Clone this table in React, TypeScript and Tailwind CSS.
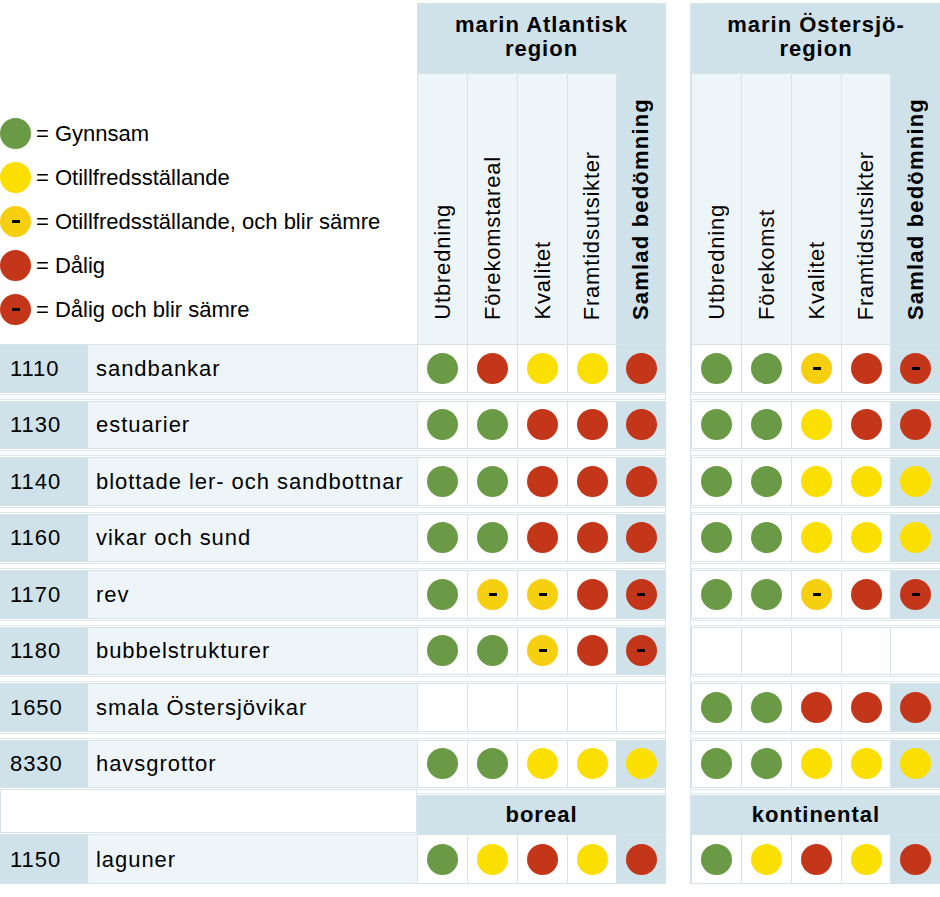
import React from "react";

type V = "g" | "y" | "yd" | "r" | "rd" | "";

type Habitat = { code: string; name: string; a: V[]; b: V[] };

const rows: Habitat[] = [
  { code: "1110", name: "sandbankar", a: ["g", "r", "y", "y", "r"], b: ["g", "g", "yd", "r", "rd"] },
  { code: "1130", name: "estuarier", a: ["g", "g", "r", "r", "r"], b: ["g", "g", "y", "r", "r"] },
  { code: "1140", name: "blottade ler- och sandbottnar", a: ["g", "g", "r", "r", "r"], b: ["g", "g", "y", "y", "y"] },
  { code: "1160", name: "vikar och sund", a: ["g", "g", "r", "r", "r"], b: ["g", "g", "y", "y", "y"] },
  { code: "1170", name: "rev", a: ["g", "yd", "yd", "r", "rd"], b: ["g", "g", "yd", "r", "rd"] },
  { code: "1180", name: "bubbelstrukturer", a: ["g", "g", "yd", "r", "rd"], b: ["", "", "", "", ""] },
  { code: "1650", name: "smala Östersjövikar", a: ["", "", "", "", ""], b: ["g", "g", "r", "r", "r"] },
  { code: "8330", name: "havsgrottor", a: ["g", "g", "y", "y", "y"], b: ["g", "g", "y", "y", "y"] },
];

const laguner: Habitat = { code: "1150", name: "laguner", a: ["g", "y", "r", "y", "r"], b: ["g", "y", "r", "y", "r"] };

const widthsA = ["w-[50px]", "w-[50px]", "w-[50px]", "w-[49px]", "w-[49px]"];
const widthsB = ["w-[50px]", "w-[50px]", "w-[50px]", "w-[49px]", "w-[50px]"];

const colsA = ["Utbredning", "Förekomstareal", "Kvalitet", "Framtidsutsikter", "Samlad bedömning"];
const colsB = ["Utbredning", "Förekomst", "Kvalitet", "Framtidsutsikter", "Samlad bedömning"];

const legend: { v: V; label: string }[] = [
  { v: "g", label: "= Gynnsam" },
  { v: "y", label: "= Otillfredsställande" },
  { v: "yd", label: "= Otillfredsställande, och blir sämre" },
  { v: "r", label: "= Dålig" },
  { v: "rd", label: "= Dålig och blir sämre" },
];

function Dot({ v }: { v: V }) {
  if (!v) return null;
  const color =
    v === "g"
      ? "bg-[#6a9a46]"
      : v === "r" || v === "rd"
        ? "bg-[#c4361a]"
        : v === "yd"
          ? "bg-[#f5cf10]"
          : "bg-[#fbdf00]";
  return (
    <span className={`flex h-[31px] w-[31px] shrink-0 items-center justify-center rounded-full ${color}`}>
      {(v === "yd" || v === "rd") && <span className="h-[3px] w-[8px] bg-black" />}
    </span>
  );
}

function Gap() {
  return <div className="w-[26px] shrink-0 self-stretch border-x border-[#d5e4eb] bg-white" />;
}

function Strip() {
  return (
    <div className="h-full py-[1px]">
      <div className="h-full border-y border-[#dde9ef] bg-white" />
    </div>
  );
}

function Cells({ vals, widths }: { vals: V[]; widths: string[] }) {
  return (
    <div className="flex border-y border-[#d5e4eb]">
      {vals.map((v, i) => (
        <div
          key={i}
          className={[
            "flex items-center justify-center border-l border-[#d5e4eb]",
            widths[i],
            i === 4 && v ? "bg-[#cfe1e9]" : "bg-white",
          ].join(" ")}
        >
          <Dot v={v} />
        </div>
      ))}
    </div>
  );
}

function Row({ r, h }: { r: Habitat; h: string }) {
  return (
    <div className={`flex ${h}`}>
      <div className="flex w-[88px] items-center border-y border-[#d5e4eb] bg-[#cfe1e9] pl-[10px]">{r.code}</div>
      <div className="flex w-[329px] items-center border-y border-[#d5e4eb] bg-[#eef5f8] pl-[8px]">{r.name}</div>
      <Cells vals={r.a} widths={widthsA} />
      <Gap />
      <Cells vals={r.b} widths={widthsB} />
    </div>
  );
}

function Sep() {
  return (
    <div className="flex h-[8px]">
      <div className="w-[665px]">
        <Strip />
      </div>
      <Gap />
      <div className="w-[249px]">
        <Strip />
      </div>
    </div>
  );
}

function Region({ title, cols, widths, w }: { title: string[]; cols: string[]; widths: string[]; w: string }) {
  return (
    <div className={`flex flex-col ${w}`}>
      <div className="h-[70px] border-l border-t border-[#d5e4eb] bg-[#cfe1e9] pt-[9px] text-center font-bold leading-[24px] tracking-[1px]">
        {title.map((t) => (
          <div key={t}>{t}</div>
        ))}
      </div>
      <div className="flex h-[271px]">
        {cols.map((c, i) => (
          <div
            key={c}
            className={[
              "flex items-end justify-center border-l border-[#d5e4eb] pb-[24px]",
              widths[i],
              i === 4 ? "bg-[#cfe1e9] font-bold tracking-[1.2px]" : "border-t bg-[#eef5f8] tracking-[0.8px]",
            ].join(" ")}
          >
            <span className="rotate-180 whitespace-nowrap leading-none [writing-mode:vertical-rl]">{c}</span>
          </div>
        ))}
      </div>
    </div>
  );
}

function Band({ label, w }: { label: string; w: string }) {
  return (
    <div className={`flex flex-col ${w}`}>
      <div className="h-[7px]">
        <Strip />
      </div>
      <div className="flex flex-1 items-center justify-center border-l border-[#d5e4eb] bg-[#cfe1e9] font-bold tracking-[1px]">
        {label}
      </div>
    </div>
  );
}

export default function App() {
  return (
    <div
      className="h-[897px] w-[940px] bg-white pt-[3px] text-[22px] text-black tracking-[0.95px]"
      style={{ fontFamily: '"Liberation Sans", Arial, sans-serif' }}
    >
      <div className="flex h-[341px]">
        <div className="flex w-[417px] flex-col gap-[13px] pt-[115px]">
          {legend.map((l) => (
            <div key={l.label} className="flex items-center gap-[5px] leading-none tracking-normal">
              <Dot v={l.v} />
              <span>{l.label}</span>
            </div>
          ))}
        </div>
        <Region title={["marin Atlantisk", "region"]} cols={colsA} widths={widthsA} w="w-[248px]" />
        <Gap />
        <Region title={["marin Östersjö-", "region"]} cols={colsB} widths={widthsB} w="w-[249px]" />
      </div>

      {rows.map((r, i) => (
        <React.Fragment key={r.code}>
          {i > 0 && <Sep />}
          <Row r={r} h="h-[48.5px]" />
        </React.Fragment>
      ))}

      <div className="flex h-[46px]">
        <div className="w-[417px] py-[1px]">
          <div className="h-full border border-[#d5e4eb] bg-white" />
        </div>
        <Band label="boreal" w="w-[248px]" />
        <Gap />
        <Band label="kontinental" w="w-[249px]" />
      </div>
      <Row r={laguner} h="h-[50px]" />
    </div>
  );
}
